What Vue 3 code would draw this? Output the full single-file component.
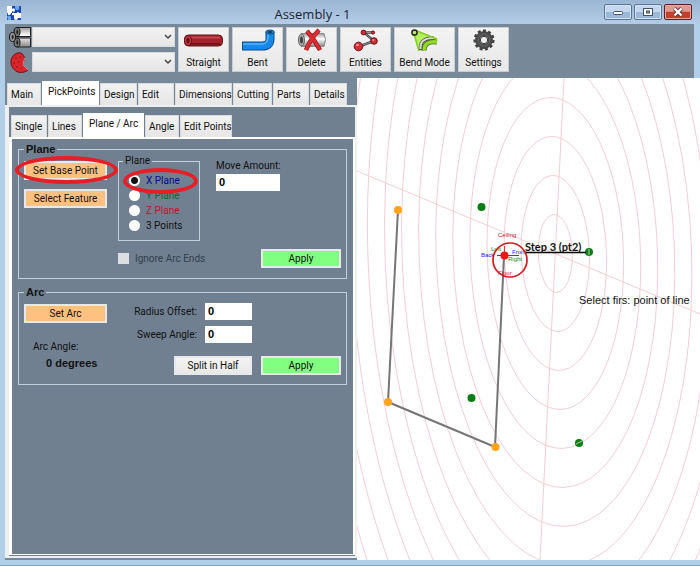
<script setup>
import { ref } from 'vue'

const mainTabs = [
  { name: 'Main', size: 'w34' },
  { name: 'PickPoints', size: 'w57' },
  { name: 'Design', size: 'w37' },
  { name: 'Edit', size: 'w36' },
  { name: 'Dimensions', size: 'w57' },
  { name: 'Cutting', size: 'w39' },
  { name: 'Parts', size: 'w36' },
  { name: 'Details', size: 'w37' },
]
const subTabs = [
  { name: 'Single', size: 'w36' },
  { name: 'Lines', size: 'w34' },
  { name: 'Plane / Arc', size: 'w61' },
  { name: 'Angle', size: 'w34' },
  { name: 'Edit Points', size: 'w52' },
]
const planes = [
  { name: 'X Plane', tone: 'blue' },
  { name: 'Y Plane', tone: 'green' },
  { name: 'Z Plane', tone: 'red' },
  { name: '3 Points', tone: 'black' },
]
const tab = ref('PickPoints')
const subTab = ref('Plane / Arc')
const plane = ref('X Plane')
const moveAmount = ref('0')
const radiusOffset = ref('0')
const sweepAngle = ref('0')
</script>

<template>
  <div class="window">
    <header class="titlebar">
      <svg class="app-icon" viewBox="0 0 14 14" aria-hidden="true">
        <rect width="14" height="14" fill="#1546b4" />
        <path d="M0 0h5v3q3-2 3 1t-3 1v2H4q0 2-2 2T1 7H0zM8 7h2q0-1 1-1t1 1h2v5h-3q0 2-2 2t-2-2V9q-2 1-2-1t3-1z" fill="#fff" />
        <path d="M8 0h4q1 3-1 4T8 2zM0 10q3-1 4 1v3H1z" fill="#6fa5ee" />
      </svg>
      <h1>Assembly - 1</h1>
      <div class="win-buttons">
        <button aria-label="Minimize"><svg viewBox="0 0 12 10"><rect x="1.500" y="4.500" width="9" height="3" rx="1" fill="#fff" stroke="#44536a" /></svg></button>
        <button aria-label="Maximize"><svg viewBox="0 0 12 10"><rect x="1.500" y="1.500" width="9" height="7" fill="#fff" stroke="#44536a" /><rect x="4.500" y="4" width="3" height="2" fill="#9ab" stroke="#44536a" /></svg></button>
        <button class="close" aria-label="Close"><svg viewBox="0 0 12 10"><path d="M2.500 1.500 9.500 8.500M9.500 1.500 2.500 8.500" stroke="#5a3038" stroke-width="4" /><path d="M2.500 1.500 9.500 8.500M9.500 1.500 2.500 8.500" stroke="#fff" stroke-width="2.400" /></svg></button>
      </div>
    </header>

    <div class="toolbar">
      <div class="pickers">
        <svg viewBox="0 0 23 21" aria-hidden="true">
          <defs>
            <linearGradient id="steel" x1="0" y1="0" x2="0" y2="1"><stop offset="0" stop-color="#999" /><stop offset=".4" stop-color="#fff" /><stop offset="1" stop-color="#888" /></linearGradient>
          </defs>
          <path d="M8 .5h13.500v9H8zM8 11h13.500v9H8z" fill="url(#steel)" stroke="#222" />
          <ellipse cx="8" cy="5" rx="3" ry="4.500" fill="#777" stroke="#111" />
          <ellipse cx="8" cy="15.500" rx="3" ry="4.500" fill="#777" stroke="#111" />
          <ellipse cx="3.500" cy="10" rx="3" ry="4.500" fill="#999" stroke="#111" />
          <ellipse cx="3.700" cy="10" rx="1" ry="2.300" fill="#222" />
          <ellipse cx="8.300" cy="5" rx="1" ry="2.300" fill="#222" />
          <ellipse cx="8.300" cy="15.500" rx="1" ry="2.300" fill="#222" />
        </svg>
        <select aria-label="Pipe"><option></option></select>
        <svg viewBox="0 0 23 21" aria-hidden="true">
          <path d="M10 .8C5 1 1.500 6 2 11c.5 5 5 9.500 9.500 9.500 3 0 6-1 7.500-2.500l-5-5 1.500-7C14.500 2.500 12.500.7 10 .8z" fill="#d9262d" stroke="#701018" />
          <path d="M15.500 6 14 13l5 5" fill="none" stroke="#f37d80" />
          <path d="M7 5v2M11 4v2M5 10v2M10 9v2M8 14v2M12 16v1" stroke="#8a1420" />
        </svg>
        <select aria-label="Material"><option></option></select>
      </div>
      <button class="tool">
        <svg viewBox="0 0 46 26"><rect x="3.500" y="7" width="38" height="11" rx="4" fill="#a3232b" stroke="#641218" /><path d="M8 9.500h31" stroke="#c2454b" stroke-width="2" /><path d="M8 16h31" stroke="#74151c" stroke-width="2" /><ellipse cx="7" cy="12.500" rx="3.500" ry="5" fill="#c33b41" stroke="#641218" /><ellipse cx="7" cy="12.500" rx="1.700" ry="3" fill="#701219" /></svg>
        <span>Straight</span>
      </button>
      <button class="tool">
        <svg viewBox="0 0 46 26"><path d="M7 18h20q8 0 8-7V4" fill="none" stroke="#0a4b88" stroke-width="9" /><path d="M8 18h19q8 0 8-7V4" fill="none" stroke="#1588ea" stroke-width="7" /><path d="M8 16h19q5 0 6-6V5" fill="none" stroke="#52b3ff" stroke-width="1.500" /><ellipse cx="35" cy="4" rx="4.300" ry="2" fill="#2d8fdc" stroke="#0a4b88" /><ellipse cx="35" cy="4" rx="2.500" ry="1" fill="#0c355d" /></svg>
        <span>Bent</span>
      </button>
      <button class="tool">
        <svg viewBox="0 0 46 26"><path d="M12 5.500h23q3 5.500 0 13H12z" fill="url(#steel)" stroke="#888" /><ellipse cx="12.500" cy="12" rx="3" ry="6" fill="#aaa" stroke="#666" /><ellipse cx="12.500" cy="12" rx="1.500" ry="3.500" fill="#444" /><path d="M18 3q7 8 13 19M30 2Q22 10 17 22" fill="none" stroke="#8e171c" stroke-width="4.500" /><path d="M18 3q7 8 13 19M30 2Q22 10 17 22" fill="none" stroke="#dc2c32" stroke-width="3.200" /></svg>
        <span>Delete</span>
      </button>
      <button class="tool">
        <svg viewBox="0 0 46 26"><path d="M16 18.500 31 13 21 4.500h9" fill="none" stroke="#444" stroke-width="2.400" /><path d="M16 18.500 31 13 21 4.500h9" fill="none" stroke="#aaa" stroke-width=".8" /><g fill="#d12f37" stroke="#701219"><circle cx="15.500" cy="18.500" r="4.300" /><circle cx="31" cy="13" r="3.300" /><circle cx="20.500" cy="4.500" r="2.400" /><circle cx="30" cy="4.500" r="1.600" /></g><circle cx="14.500" cy="17" r="1.300" fill="#f59a9d" /><circle cx="30.300" cy="12" r="1" fill="#f59a9d" /></svg>
        <span>Entities</span>
      </button>
      <button class="tool wide">
        <svg viewBox="0 0 46 26"><path d="m14 3 22 8-13 4-3 8-2-1-7-17z" fill="#b5ef5d" /><path d="M22 22.500q0-10 13-8.500" fill="none" stroke="#4c6b20" stroke-width="5" /><path d="M22 22.500q0-10 13-8.500" fill="none" stroke="#92da26" stroke-width="3.500" /><path d="M18.500 22q-1-12 13-12" fill="none" stroke="#444" stroke-width="3.600" /><path d="M18.500 21q-1-11 13-11" fill="none" stroke="#d8dcd3" stroke-width="2.200" /><path d="m12 6 5 17M15 3l20 8" stroke="#86cd1f" stroke-width="1.600" /><circle cx="12.500" cy="4.500" r="2.600" fill="#b5ef5d" stroke="#222" stroke-width="1.500" /></svg>
        <span>Bend Mode</span>
      </button>
      <button class="tool">
        <svg viewBox="0 0 46 26"><circle cx="23" cy="12" r="6.500" fill="none" stroke="#4b4b4b" stroke-width="5" /><circle cx="23" cy="12" r="9.300" fill="none" stroke="#444" stroke-width="2.600" stroke-dasharray="3 2.310" /><circle cx="23" cy="12" r="6" fill="none" stroke="#666" stroke-width="1" /><circle cx="23" cy="12" r="3.700" fill="#eee" stroke="#333" /></svg>
        <span>Settings</span>
      </button>
    </div>

    <main class="workspace">
      <section class="panel">
        <nav class="tabs main-tabs" role="tablist">
          <button v-for="t in mainTabs" :key="t.name" role="tab" :aria-selected="tab === t.name" :class="['tab', t.size, { active: tab === t.name }]" @click="tab = t.name">{{ t.name }}</button>
        </nav>
        <div class="page outer-page">
          <nav class="tabs" role="tablist">
            <button v-for="t in subTabs" :key="t.name" role="tab" :aria-selected="subTab === t.name" :class="['tab', t.size, { active: subTab === t.name }]" @click="subTab = t.name">{{ t.name }}</button>
          </nav>
          <div class="page inner-page">
            <fieldset class="group">
              <legend>Plane</legend>
              <div class="plane-grid">
                <div class="stack">
                  <div class="marked">
                    <button class="btn orange">Set Base Point</button>
                    <span class="ring base-ring"></span>
                  </div>
                  <button class="btn orange">Select Feature</button>
                </div>
                <fieldset class="planes">
                  <legend>Plane</legend>
                  <label v-for="p in planes" :key="p.name" :class="['radio', p.tone]">
                    <input v-model="plane" type="radio" name="plane" :value="p.name" />{{ p.name }}
                  </label>
                  <span class="ring plane-ring"></span>
                </fieldset>
                <div class="move">
                  <label for="move">Move Amount:</label>
                  <input id="move" v-model="moveAmount" class="field" type="text" />
                </div>
              </div>
              <div class="plane-foot">
                <label class="check"><input type="checkbox" disabled />Ignore Arc Ends</label>
                <button class="btn lime">Apply</button>
              </div>
            </fieldset>

            <fieldset class="group">
              <legend>Arc</legend>
              <div class="arc-grid">
                <div class="arc-left">
                  <button class="btn orange">Set Arc</button>
                  <span class="arc-label">Arc Angle:</span>
                  <output>0 degrees</output>
                </div>
                <div class="arc-right">
                  <div class="row">
                    <label for="radius">Radius Offset:</label>
                    <input id="radius" v-model="radiusOffset" class="field" type="text" />
                  </div>
                  <div class="row">
                    <label for="sweep">Sweep Angle:</label>
                    <input id="sweep" v-model="sweepAngle" class="field" type="text" />
                  </div>
                  <div class="arc-actions">
                    <button class="btn plain">Split in Half</button>
                    <button class="btn lime">Apply</button>
                  </div>
                </div>
              </div>
            </fieldset>
          </div>
        </div>
      </section>

      <section class="view">
        <svg viewBox="357 78 343 482" preserveAspectRatio="xMinYMin slice" role="img" aria-label="Assembly view">
          <g fill="none" stroke="#f6cdd5">
            <g transform="matrix(16.97 7.060 -1.940 38.350 555.300 253.500)">
              <circle v-for="n in 17" :key="n" :r="n" vector-effect="non-scaling-stroke" />
            </g>
            <path d="M357 171 700 314M564 78 540 560" />
          </g>
          <path d="M398 210 388 402 495 447 504 256" fill="none" stroke="#757575" stroke-width="2" />
          <g fill="#ffa51a"><circle cx="398" cy="210" r="4" /><circle cx="388" cy="402" r="4" /><circle cx="495.500" cy="447" r="4" /></g>
          <g fill="#0a7d14"><circle cx="481.500" cy="207" r="4" /><circle cx="589" cy="252" r="4" /><circle cx="471.500" cy="398" r="4" /><circle cx="579" cy="443" r="4" /></g>
          <path d="m576 444 6-3M589 249v6" stroke="#b9cdb2" />
          <path d="M497 255.500h22" stroke="#3a3aef" />
          <path d="M504.500 246v10" stroke="#e33" />
          <g class="axis">
            <text x="498" y="237" fill="#d5202a">Ceiling</text>
            <text x="498" y="275" fill="#d5202a">Floor</text>
            <text x="481" y="257" fill="#2222e8">Back</text>
            <text x="512" y="254" fill="#2222e8">Front</text>
            <text x="491" y="251" fill="#148a22">Left</text>
            <text x="508" y="261" fill="#148a22">Right</text>
          </g>
          <circle cx="504.500" cy="255.500" r="4" fill="#f21616" />
          <circle cx="510" cy="260" r="17" fill="none" stroke="#d91824" stroke-width="1.700" />
          <path d="M526 252.500h60" stroke="#000" stroke-width="1.500" />
          <text class="step" x="525" y="251">Step 3 (pt2)</text>
          <text class="prompt" x="579" y="304">Select firs: point of line</text>
        </svg>
      </section>
    </main>
  </div>
</template>

<style>
body { margin: 0; }
</style>

<style scoped>
* { box-sizing: border-box; }
.window {
  min-height: 100vh;
  display: flex;
  flex-direction: column;
  background: #b2cfe9;
  border-bottom: 1px solid #58b4cc;
  font: 10px/12px Roboto, "Liberation Sans", sans-serif;
  color: #111;
}
button, input, select { font: inherit; color: inherit; margin: 0; }
button { padding: 0; white-space: nowrap; }

.titlebar {
  height: 24px;
  display: grid;
  grid-template-columns: 100px 1fr 100px;
  align-items: center;
  padding: 0 8px 0 7px;
  background: linear-gradient(#9ab5d2, #b4cce7);
}
.app-icon { width: 14px; height: 14px; margin-top: 2px; }
h1 { margin: 3px 74px 0 0; text-align: center; font: 13px/18px "Open Sans", sans-serif; color: #1b2530; }
.win-buttons { display: flex; justify-content: flex-end; gap: 2px; }
.win-buttons button {
  width: 28px; height: 16px; display: grid; place-items: center;
  border: 1px solid #5d7594; border-radius: 2px;
  background: linear-gradient(#c3d7ee 48%, #9cb8d8 50%);
  box-shadow: inset 0 0 0 1px #d4e3f3;
}
.win-buttons .close { border-color: #5b1f27; background: linear-gradient(#e09a90 45%, #c3402f 50%); box-shadow: inset 0 0 0 1px #e6a9a0; }
.win-buttons svg { width: 12px; height: 10px; }

.toolbar {
  height: 54px;
  margin: 0 6px 0 5px;
  padding: 3px 4px;
  display: flex;
  align-items: flex-start;
  gap: 3px;
  background: #778899;
}
.pickers { display: grid; grid-template-columns: 23px 143px; gap: 4px 0; }
.pickers svg { width: 23px; height: 21px; }
select {
  appearance: none;
  height: 20px;
  border: 1px solid #d8dade;
  border-radius: 0;
  background: url("data:image/svg+xml,%3Csvg xmlns='http://www.w3.org/2000/svg' width='8' height='6'%3E%3Cpath d='M1 1l3 3 3-3' fill='none' stroke='%23444' stroke-width='1.500'/%3E%3C/svg%3E") no-repeat right 2px center, linear-gradient(#f2f2f2, #e6e6e6);
}
.tool {
  width: 51px; height: 45px;
  display: flex; flex-direction: column; align-items: center;
  border: 1px solid #c9ccd0;
  background: linear-gradient(#f3f3f3, #e8e8e8);
  line-height: 14px;
}
.tool.wide { width: 61px; }
.tool svg { width: 46px; height: 26px; flex: none; }
.tool span { margin-top: 2px; }

.workspace { flex: 1; display: grid; grid-template-columns: 352px minmax(0, 1fr); padding-left: 5px; margin-bottom: 5px; }
.panel { display: flex; flex-direction: column; background: #778899; padding-bottom: 2px; }
.tabs { display: flex; align-items: flex-end; gap: 1px; padding-left: 2px; height: 25px; }
.main-tabs { height: 27px; }
.tab {
  height: 22px; border: 1px solid #d9dcdf; border-bottom: 0; padding-left: 3px;
  background: linear-gradient(#f2f2f2, #e6e6e6);
  text-align: left;
}
.tab.active { height: 24px; background: #fff; border-color: #fff; padding: 0 0 4px 5px; }
.w34 { width: 34px; } .w36 { width: 36px; } .w37 { width: 37px; } .w39 { width: 39px; }
.w52 { width: 52px; } .w57 { width: 57px; } .w61 { width: 61px; }
.page { flex: 1; display: flex; flex-direction: column; background: #708090; border: solid #fff; }
.outer-page { border-color: #eceef0; border-width: 2px 2px 2px 4px; padding: 5px 0 1px; }
.inner-page { border-width: 2px 2px 1px 3px; padding: 4px 6px 0; gap: 7px; }
fieldset { margin: 0; min-width: 0; border: 1px solid #c3d0dc; }
.group { padding: 0 5px; }
.group legend { padding: 0 2px; }
.group > legend { font: bold 11px/12px "Liberation Sans", sans-serif; }

.btn { height: 19px; border: 2px solid #e6e8ea; line-height: 14px; background: #eee; }
.orange { width: 83px; background: #ffc080; }
.lime { width: 80px; background: #80ff80; }
.plain { width: 78px; background: linear-gradient(#f4f4f4, #e8e8e8); }

.plane-grid { display: grid; grid-template-columns: 83px 82px auto; justify-content: start; column-gap: 11px; }
.stack { display: flex; flex-direction: column; gap: 9px; padding-top: 6px; }
.marked, .planes { position: relative; }
.ring { position: absolute; border: 4px solid #e81e26; border-radius: 50%; pointer-events: none; }
.base-ring { left: -9px; top: -5px; width: 103px; height: 28px; }
.plane-ring { left: 4px; top: 1px; width: 75px; height: 26px; }
.planes { height: 86px; padding: 6px 0 0 10px; }
.planes legend { margin-left: -6px; }
.radio { display: flex; align-items: center; gap: 6px; height: 15px; }
.radio input { appearance: none; width: 11px; height: 11px; border-radius: 50%; background: #fff; }
.radio input:checked { background: radial-gradient(circle, #111 0 3px, #fff 4px); }
.blue { color: #0a0a90; } .green { color: #0c6b2a; } .red { color: #c0142c; }
.move { padding: 5px 0 0 5px; display: flex; flex-direction: column; gap: 2px; }
.field { width: 64px; height: 17px; border: 0; border-radius: 0; padding: 0 3px; background: #fff; font: bold 11px/17px "Liberation Sans", sans-serif; color: #000; }
.plane-foot { display: flex; justify-content: space-between; align-items: center; padding: 8px 0 10px 94px; }
.check { display: flex; align-items: center; gap: 6px; color: #333f4c; }
.check input { appearance: none; width: 11px; height: 11px; background: #dcdee0; }

.arc-grid { display: grid; grid-template-columns: 83px 1fr; padding: 5px 0 9px; }
.arc-left { display: flex; flex-direction: column; align-items: flex-start; padding-top: 1px; }
.arc-label { margin: 18px 0 4px 9px; }
output { margin-left: 22px; white-space: nowrap; font: bold 11px/12px "Liberation Sans", sans-serif; }
.arc-right { display: flex; flex-direction: column; gap: 6px; }
.row { display: flex; align-items: center; gap: 8px; }
.row label { width: 90px; text-align: right; }
.row .field { width: 47px; }
.arc-actions { display: flex; justify-content: flex-end; gap: 9px; margin-top: 7px; }

.view { background: #fff; overflow: hidden; min-height: 482px; }
.view svg { display: block; width: 100%; height: 100%; }
.axis text { font: 6px "Liberation Sans", sans-serif; }
.step { font: bold 11px Lato, sans-serif; fill: #111; }
.prompt { font: 11px "Liberation Sans", sans-serif; fill: #111; }
</style>
